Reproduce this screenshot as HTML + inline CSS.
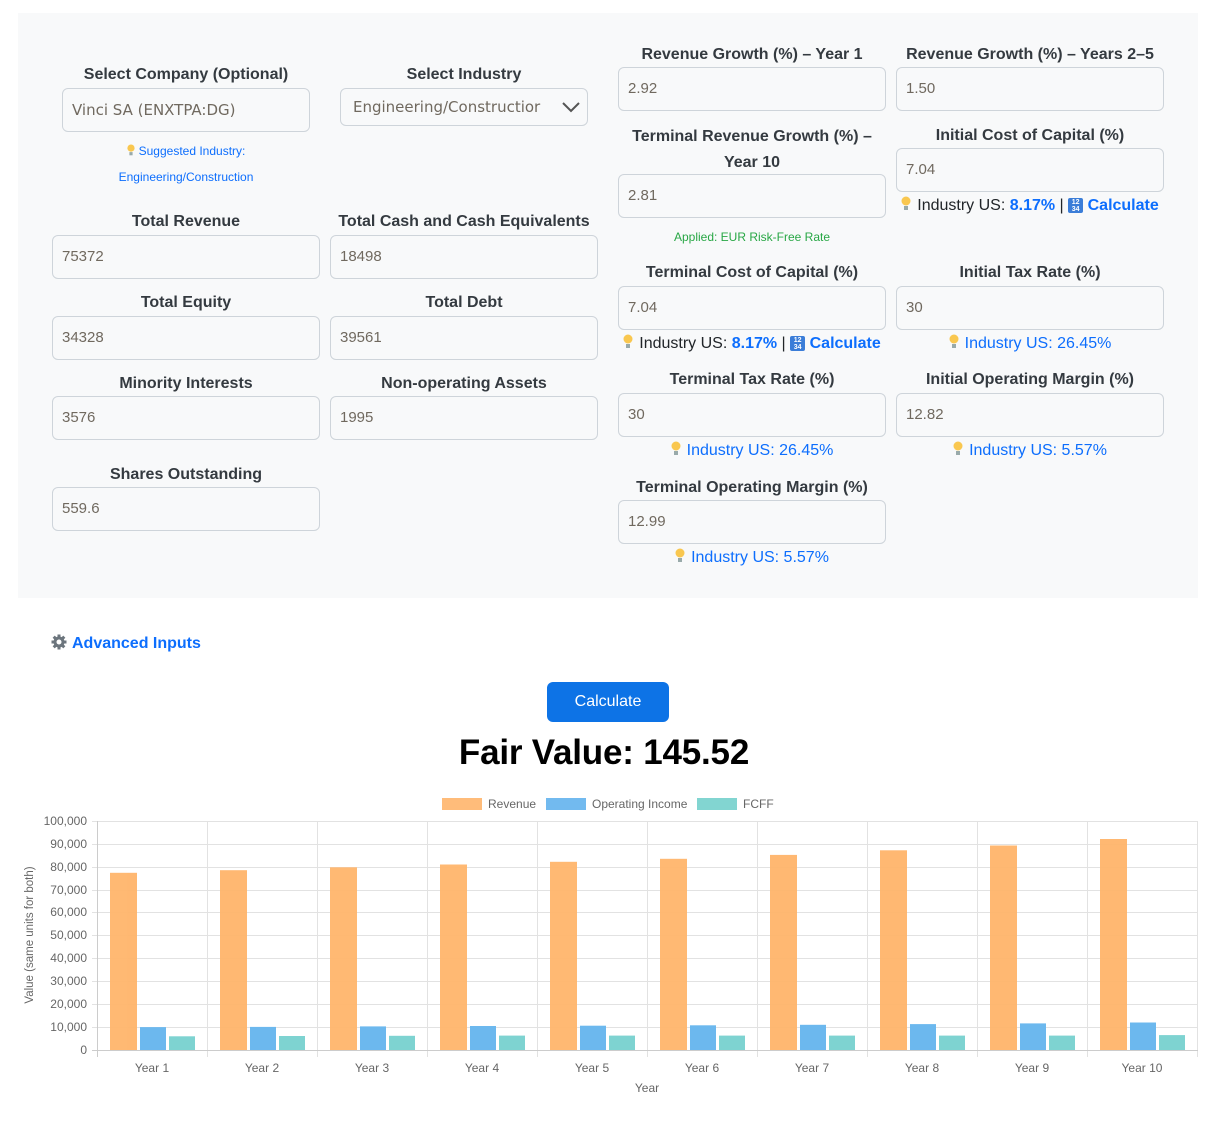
<!DOCTYPE html>
<html><head><meta charset="utf-8"><style>
*{box-sizing:border-box;margin:0;padding:0}
body{width:1208px;height:1131px;background:#fff;font-family:"Liberation Sans",Arial,sans-serif;position:relative;overflow:hidden}
.panel{position:absolute;left:18px;top:13px;width:1180px;height:585px;background:#f8f9fa}
.l{position:absolute;font-weight:bold;font-size:16px;color:#343a40;text-align:center;white-space:nowrap;line-height:20px;transform:translateY(2px)}
.i{position:absolute;height:44px;border:1px solid #ced4da;border-radius:6px;background:#f8f9fa;font-size:15px;color:#70695f;padding-left:9px;line-height:42px}
.h{position:absolute;text-align:center;white-space:nowrap;font-size:16px;line-height:20px;color:#0d6efd;transform:translateY(2px)}
.h.k{color:#212529}
.b{color:#0d6efd;font-weight:bold}
.bulb{display:inline-block;width:10px;height:16px;vertical-align:-2px;margin-right:6px}
.num{display:inline-block;width:15px;height:15px;background:#3b7dd8;border-radius:2px;color:#fff;font-size:7px;line-height:7px;text-align:center;vertical-align:-1px;font-weight:bold;padding-top:1px}
</style></head><body>
<div class="panel"></div>

<div class="l" style="left:52px;width:268px;top:63px">Select Company (Optional)</div>
<div class="i" style="left:62px;top:88px;width:248px;font-family:'DejaVu Sans',sans-serif;font-size:15px">Vinci SA (ENXTPA:DG)</div>
<div class="l" style="left:330px;width:268px;top:63px">Select Industry</div>
<div class="i" style="left:340px;top:88px;width:248px;height:38px;line-height:36px;padding-left:12px;font-family:'DejaVu Sans',sans-serif;font-size:15px;overflow:hidden">Engineering/Constructior
<svg style="position:absolute;right:6px;top:10px" width="20" height="16" viewBox="0 0 20 16"><path d="M2 4 L10 12 L18 4" fill="none" stroke="#555" stroke-width="2"/></svg></div>
<div class="h" style="left:52px;width:268px;top:139px;font-size:12px"><svg class="bulb" viewBox="0 0 10 16" style="width:8px;height:13px;margin-right:4px"><circle cx="5" cy="5" r="4.5" fill="#f9c74f"/><rect x="3" y="10" width="4" height="4" fill="#9aa"/></svg>Suggested Industry:</div>
<div class="h" style="left:52px;width:268px;top:165px;font-size:12px">Engineering/Construction</div>

<div class="l" style="left:52px;width:268px;top:210px">Total Revenue</div>
<div class="i" style="left:52px;top:235px;width:268px">75372</div>
<div class="l" style="left:330px;width:268px;top:210px">Total Cash and Cash Equivalents</div>
<div class="i" style="left:330px;top:235px;width:268px">18498</div>

<div class="l" style="left:52px;width:268px;top:291px">Total Equity</div>
<div class="i" style="left:52px;top:316px;width:268px">34328</div>
<div class="l" style="left:330px;width:268px;top:291px">Total Debt</div>
<div class="i" style="left:330px;top:316px;width:268px">39561</div>

<div class="l" style="left:52px;width:268px;top:372px">Minority Interests</div>
<div class="i" style="left:52px;top:396px;width:268px">3576</div>
<div class="l" style="left:330px;width:268px;top:372px">Non-operating Assets</div>
<div class="i" style="left:330px;top:396px;width:268px">1995</div>

<div class="l" style="left:52px;width:268px;top:463px">Shares Outstanding</div>
<div class="i" style="left:52px;top:487px;width:268px">559.6</div>

<div class="l" style="left:618px;width:268px;top:43px">Revenue Growth (%) – Year 1</div>
<div class="i" style="left:618px;top:67px;width:268px">2.92</div>
<div class="l" style="left:618px;width:268px;top:122px;line-height:26px">Terminal Revenue Growth (%) –<br>Year 10</div>
<div class="i" style="left:618px;top:174px;width:268px">2.81</div>
<div class="h" style="left:618px;width:268px;top:225px;font-size:12px;color:#28a745">Applied: EUR Risk-Free Rate</div>
<div class="l" style="left:618px;width:268px;top:261px">Terminal Cost of Capital (%)</div>
<div class="i" style="left:618px;top:286px;width:268px">7.04</div>
<div class="h k" style="left:618px;width:268px;top:332px"><svg class="bulb" viewBox="0 0 10 16"><circle cx="5" cy="5" r="4.5" fill="#f9c74f"/><rect x="3" y="10" width="4" height="4" fill="#9aa"/></svg>Industry US: <span class="b">8.17%</span> | <span class="num">12<br>34</span> <span class="b">Calculate</span></div>
<div class="l" style="left:618px;width:268px;top:368px">Terminal Tax Rate (%)</div>
<div class="i" style="left:618px;top:393px;width:268px">30</div>
<div class="h" style="left:618px;width:268px;top:439px"><svg class="bulb" viewBox="0 0 10 16"><circle cx="5" cy="5" r="4.5" fill="#f9c74f"/><rect x="3" y="10" width="4" height="4" fill="#9aa"/></svg>Industry US: 26.45%</div>
<div class="l" style="left:618px;width:268px;top:476px">Terminal Operating Margin (%)</div>
<div class="i" style="left:618px;top:500px;width:268px">12.99</div>
<div class="h" style="left:618px;width:268px;top:546px"><svg class="bulb" viewBox="0 0 10 16"><circle cx="5" cy="5" r="4.5" fill="#f9c74f"/><rect x="3" y="10" width="4" height="4" fill="#9aa"/></svg>Industry US: 5.57%</div>

<div class="l" style="left:896px;width:268px;top:43px">Revenue Growth (%) – Years 2–5</div>
<div class="i" style="left:896px;top:67px;width:268px">1.50</div>
<div class="l" style="left:896px;width:268px;top:124px">Initial Cost of Capital (%)</div>
<div class="i" style="left:896px;top:148px;width:268px">7.04</div>
<div class="h k" style="left:896px;width:268px;top:194px"><svg class="bulb" viewBox="0 0 10 16"><circle cx="5" cy="5" r="4.5" fill="#f9c74f"/><rect x="3" y="10" width="4" height="4" fill="#9aa"/></svg>Industry US: <span class="b">8.17%</span> | <span class="num">12<br>34</span> <span class="b">Calculate</span></div>
<div class="l" style="left:896px;width:268px;top:261px">Initial Tax Rate (%)</div>
<div class="i" style="left:896px;top:286px;width:268px">30</div>
<div class="h" style="left:896px;width:268px;top:332px"><svg class="bulb" viewBox="0 0 10 16"><circle cx="5" cy="5" r="4.5" fill="#f9c74f"/><rect x="3" y="10" width="4" height="4" fill="#9aa"/></svg>Industry US: 26.45%</div>
<div class="l" style="left:896px;width:268px;top:368px">Initial Operating Margin (%)</div>
<div class="i" style="left:896px;top:393px;width:268px">12.82</div>
<div class="h" style="left:896px;width:268px;top:439px"><svg class="bulb" viewBox="0 0 10 16"><circle cx="5" cy="5" r="4.5" fill="#f9c74f"/><rect x="3" y="10" width="4" height="4" fill="#9aa"/></svg>Industry US: 5.57%</div>

<div style="position:absolute;left:51px;top:634px;font-size:16px;font-weight:bold;color:#0d6efd;line-height:20px;white-space:nowrap">
<svg width="16" height="16" viewBox="0 0 16 16" style="vertical-align:-2px;margin-right:5px"><g fill="#6c757d"><circle cx="8" cy="8" r="5.5"/><rect x="6.5" y="0.5" width="3" height="15"/><rect x="0.5" y="6.5" width="15" height="3"/><rect x="6.5" y="0.5" width="3" height="15" transform="rotate(45 8 8)"/><rect x="6.5" y="0.5" width="3" height="15" transform="rotate(-45 8 8)"/></g><circle cx="8" cy="8" r="2.5" fill="#fff"/></svg>Advanced Inputs</div>

<div style="position:absolute;left:547px;top:682px;width:122px;height:40px;background:#0d73e6;border-radius:6px;color:#fff;font-size:16px;text-align:center;line-height:40px">Calculate</div>
<div style="position:absolute;left:0;width:1208px;top:732px;text-align:center;font-size:35px;font-weight:bold;color:#000;line-height:42px;letter-spacing:-0.2px">Fair Value: 145.52</div>

<svg style="position:absolute;left:0;top:790px" width="1208" height="320" viewBox="0 790 1208 320" font-family="Liberation Sans, Arial, sans-serif" font-size="12" fill="#666">
<rect x="442" y="798" width="40" height="12" fill="#ffb56b" opacity=".9"/><text x="488" y="808">Revenue</text>
<rect x="546" y="798" width="40" height="12" fill="#63b3ed" opacity=".9"/><text x="592" y="808">Operating Income</text>
<rect x="697" y="798" width="40" height="12" fill="#74d0cc" opacity=".9"/><text x="743" y="808">FCFF</text>
<g stroke="#e2e2e2" stroke-width="1">
<line x1="92" y1="821.5" x2="1198" y2="821.5"/><line x1="92" y1="844.5" x2="1198" y2="844.5"/><line x1="92" y1="867.5" x2="1198" y2="867.5"/><line x1="92" y1="890.5" x2="1198" y2="890.5"/><line x1="92" y1="912.5" x2="1198" y2="912.5"/><line x1="92" y1="935.5" x2="1198" y2="935.5"/><line x1="92" y1="958.5" x2="1198" y2="958.5"/><line x1="92" y1="981.5" x2="1198" y2="981.5"/><line x1="92" y1="1004.5" x2="1198" y2="1004.5"/><line x1="92" y1="1027.5" x2="1198" y2="1027.5"/>
<line x1="207.5" y1="821" x2="207.5" y2="1057"/><line x1="317.5" y1="821" x2="317.5" y2="1057"/><line x1="427.5" y1="821" x2="427.5" y2="1057"/><line x1="537.5" y1="821" x2="537.5" y2="1057"/><line x1="647.5" y1="821" x2="647.5" y2="1057"/><line x1="757.5" y1="821" x2="757.5" y2="1057"/><line x1="867.5" y1="821" x2="867.5" y2="1057"/><line x1="977.5" y1="821" x2="977.5" y2="1057"/><line x1="1087.5" y1="821" x2="1087.5" y2="1057"/><line x1="1197.5" y1="821" x2="1197.5" y2="1057"/>
</g>
<g stroke="#ccc"><line x1="97.5" y1="821" x2="97.5" y2="1057"/><line x1="92" y1="1050.5" x2="1198" y2="1050.5"/></g>
<g fill="#ffb56b" opacity=".95">
<rect x="110" y="872.8" width="27" height="177.2"/><rect x="220" y="870.2" width="27" height="179.8"/><rect x="330" y="867.3" width="27" height="182.7"/><rect x="440" y="864.5" width="27" height="185.5"/><rect x="550" y="861.8" width="27" height="188.2"/><rect x="660" y="858.8" width="27" height="191.2"/><rect x="770" y="854.9" width="27" height="195.1"/><rect x="880" y="850.3" width="27" height="199.7"/><rect x="990" y="845.5" width="27" height="204.5"/><rect x="1100" y="839" width="27" height="211"/>
</g>
<g fill="#6cb8ee">
<rect x="140" y="1027.1" width="26" height="22.9"/><rect x="250" y="1026.9" width="26" height="23.1"/><rect x="360" y="1026.4" width="26" height="23.6"/><rect x="470" y="1026" width="26" height="24"/><rect x="580" y="1025.7" width="26" height="24.3"/><rect x="690" y="1025.3" width="26" height="24.7"/><rect x="800" y="1024.8" width="26" height="25.2"/><rect x="910" y="1024.1" width="26" height="25.9"/><rect x="1020" y="1023.4" width="26" height="26.6"/><rect x="1130" y="1022.5" width="26" height="27.5"/>
</g>
<g fill="#7ed3d1">
<rect x="169" y="1036.3" width="26" height="13.7"/><rect x="279" y="1036" width="26" height="14"/><rect x="389" y="1035.8" width="26" height="14.2"/><rect x="499" y="1035.6" width="26" height="14.4"/><rect x="609" y="1035.6" width="26" height="14.4"/><rect x="719" y="1035.6" width="26" height="14.4"/><rect x="829" y="1035.6" width="26" height="14.4"/><rect x="939" y="1035.6" width="26" height="14.4"/><rect x="1049" y="1035.6" width="26" height="14.4"/><rect x="1159" y="1035.1" width="26" height="14.9"/>
</g>
<g text-anchor="end">
<text x="87" y="825">100,000</text><text x="87" y="848">90,000</text><text x="87" y="871">80,000</text><text x="87" y="894">70,000</text><text x="87" y="916">60,000</text><text x="87" y="939">50,000</text><text x="87" y="962">40,000</text><text x="87" y="985">30,000</text><text x="87" y="1008">20,000</text><text x="87" y="1031">10,000</text><text x="87" y="1054">0</text>
</g>
<g text-anchor="middle">
<text x="152" y="1072">Year 1</text><text x="262" y="1072">Year 2</text><text x="372" y="1072">Year 3</text><text x="482" y="1072">Year 4</text><text x="592" y="1072">Year 5</text><text x="702" y="1072">Year 6</text><text x="812" y="1072">Year 7</text><text x="922" y="1072">Year 8</text><text x="1032" y="1072">Year 9</text><text x="1142" y="1072">Year 10</text>
<text x="647" y="1092">Year</text>
<text transform="translate(33 935) rotate(-90)" font-size="11.5">Value (same units for both)</text>
</g>
</svg>
</body></html>
